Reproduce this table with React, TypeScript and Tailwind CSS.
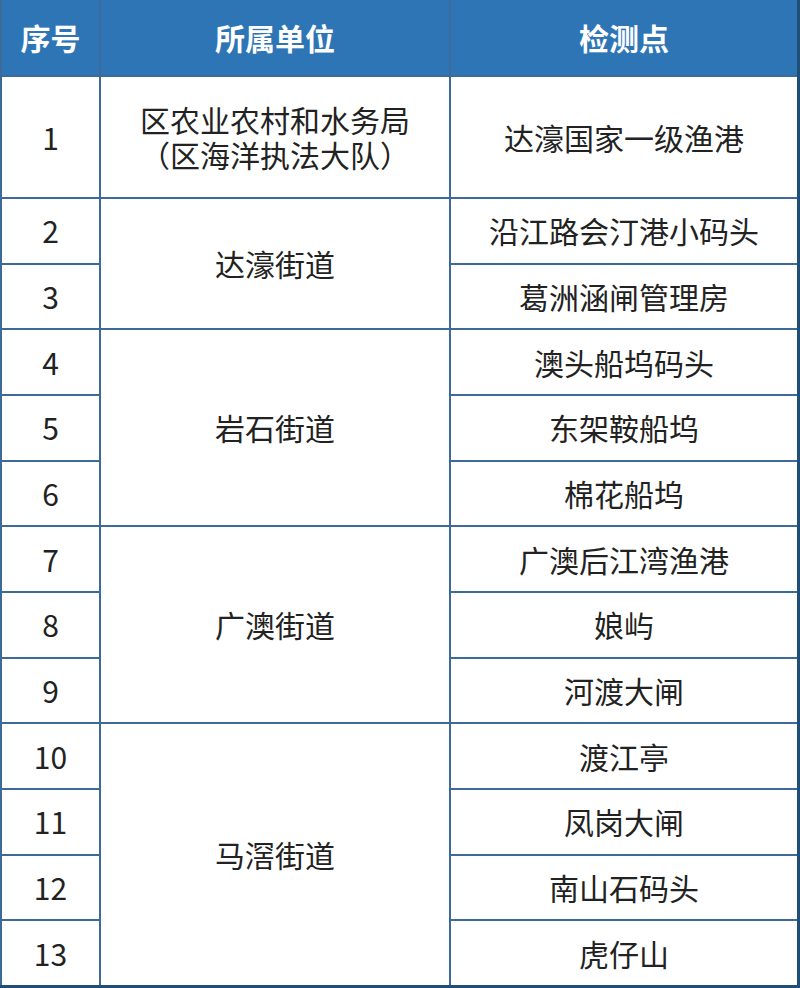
const rows: { no: number; point: string }[] = [
  { no: 2, point: '沿江路会汀港小码头' },
  { no: 3, point: '葛洲涵闸管理房' },
  { no: 4, point: '澳头船坞码头' },
  { no: 5, point: '东架鞍船坞' },
  { no: 6, point: '棉花船坞' },
  { no: 7, point: '广澳后江湾渔港' },
  { no: 8, point: '娘屿' },
  { no: 9, point: '河渡大闸' },
  { no: 10, point: '渡江亭' },
  { no: 11, point: '凤岗大闸' },
  { no: 12, point: '南山石码头' },
  { no: 13, point: '虎仔山' },
];

// unit groups with their grid row placement (row 1 is the header)
const units: { name: string; start: string; span: string }[] = [
  { name: '达濠街道', start: 'row-start-3', span: 'row-span-2' },
  { name: '岩石街道', start: 'row-start-5', span: 'row-span-3' },
  { name: '广澳街道', start: 'row-start-8', span: 'row-span-3' },
  { name: '马滘街道', start: 'row-start-11', span: 'row-span-4' },
];

const cell = 'bg-white flex items-center justify-center text-center';

export default function App() {
  return (
    <div
      className="w-[800px] h-[988px] bg-[#3d6b99] pl-[2px] border-r-[3px] border-b-[3px] border-[#1f4e79] grid grid-cols-[97px_348px_1fr] grid-rows-[75px_120px_repeat(12,1fr)] gap-[2px] text-[30px] text-[#222] leading-[35px]"
      style={{ fontFamily: '"Noto Sans CJK SC", "Noto Sans", sans-serif' }}
    >
      <div className="bg-[#2e75b6] text-white font-semibold flex items-center justify-center">序号</div>
      <div className="bg-[#2e75b6] text-white font-semibold flex items-center justify-center">所属单位</div>
      <div className="bg-[#2e75b6] text-white font-semibold flex items-center justify-center">检测点</div>

      <div className={`${cell} col-start-1 row-start-2`}>1</div>
      <div className={`${cell} col-start-2 row-start-2 flex-col`}>
        <span>区农业农村和水务局</span>
        <span>（区海洋执法大队）</span>
      </div>
      <div className={`${cell} col-start-3 row-start-2`}>达濠国家一级渔港</div>

      {rows.map((r, i) => (
        <div key={`n${r.no}`} className={`${cell} col-start-1`} style={{ gridRowStart: i + 3 }}>
          {r.no}
        </div>
      ))}
      {units.map((u) => (
        <div key={u.name} className={`${cell} col-start-2 ${u.start} ${u.span}`}>
          {u.name}
        </div>
      ))}
      {rows.map((r, i) => (
        <div key={`p${r.no}`} className={`${cell} col-start-3`} style={{ gridRowStart: i + 3 }}>
          {r.point}
        </div>
      ))}
    </div>
  );
}
